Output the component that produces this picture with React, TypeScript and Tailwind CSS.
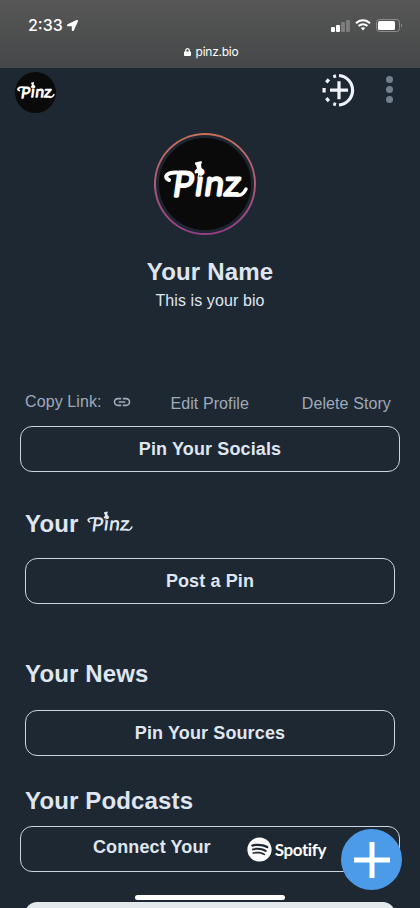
import React from "react";
import { FaSpotify, FaLock, FaLocationArrow } from "react-icons/fa";
import { MdLink } from "react-icons/md";

const PinzLogo: React.FC<{ className?: string; weight?: number }> = ({ className, weight = 3 }) => (
  <svg
    viewBox="0 0 82 40"
    className={`overflow-visible ${className}`}
    fill="currentColor"
    stroke="currentColor"
    strokeLinecap="round"
    strokeLinejoin="round"
  >
    <text
      x="7 26.5 35 52.5"
      y="31.5 30.5 30.5 30.5"
      fontSize="30"
      fontFamily="Lato, 'Open Sans', sans-serif"
      fontWeight="300"
      strokeWidth={weight}
      transform="translate(5 0) skewX(-8) scale(1.13 1.12)"
    >
      Pinz
    </text>
    {/* flourishes */}
    <path d="M5 19 C-1 16 3 11 13 11.5" fill="none" strokeWidth={weight + 1} />
    <path d="M73 34 C77 35 80 32 82 28" fill="none" strokeWidth={weight + 0.5} />
    {/* push pin */}
    <path d="M31 1.5 L37.5 0 L38 2 L37 3 L37.5 7 L40 9 L39.5 11 L31 12.5 L30.5 10 L33 7.5 L32 4 L31 3.5 Z" stroke="none" />
    <path d="M35 12 L34 17" fill="none" strokeWidth="1.2" />
  </svg>
);

const StatusBar = () => (
  <div className="h-[68px] bg-linear-to-b from-[#575757] to-[#454748] text-white">
    <div className="flex items-center justify-between h-[42px] pt-2 pl-7 pr-[17px]">
      <div className="flex items-center gap-1">
        <span className="font-['Inter'] text-[16px] font-medium leading-none">2:33</span>
        <FaLocationArrow className="w-[11px] h-[11px]" />
      </div>
      <div className="flex items-center gap-[5px]">
        <svg width="19" height="13" viewBox="0 0 19 13" fill="#fff">
          <rect x="0" y="8" width="4" height="5" rx="1" />
          <rect x="5" y="6" width="4" height="7" rx="1" />
          <rect x="10" y="3" width="4" height="10" rx="1" opacity=".25" />
          <rect x="15" y="1" width="4" height="12" rx="1" opacity=".25" />
        </svg>
        <svg width="16" height="12" viewBox="0 0 16 12" fill="none" stroke="#fff" strokeWidth="2">
          <path d="M1 4.3 C5 .1 11 .1 15 4.3" />
          <path d="M3.6 7 C6 4.5 10 4.5 12.4 7" />
          <path d="M5.8 9 C7 8 9 8 10.2 9 L8 11.4 Z" fill="#fff" stroke="none" />
        </svg>
        <svg width="27" height="13" viewBox="0 0 27 13">
          <rect x=".5" y=".5" width="23" height="12" rx="3" fill="none" stroke="#8d8d8d" />
          <rect x="2" y="2" width="17" height="9" rx="1.5" fill="#fff" />
          <path d="M25 4.5 Q27 6.5 25 8.5 Z" fill="#8d8d8d" />
        </svg>
      </div>
    </div>
    <div className="flex items-center justify-center gap-[5px] h-5 pl-[2px]">
      <FaLock className="w-[7px] h-[10px]" />
      <span className="font-['Inter'] text-[12px] leading-none tracking-[-0.25px]">pinz.bio</span>
    </div>
  </div>
);

const PinButton: React.FC<{ children: React.ReactNode; className?: string }> = ({ children, className = "" }) => (
  <button
    type="button"
    className={`flex items-center justify-center h-[46px] rounded-xl border border-[#cbd5e0] text-lg font-bold leading-none tracking-[0.12px] ${className}`}
  >
    {children}
  </button>
);

const App: React.FC = () => {
  return (
    <div className="relative w-[420px] h-[908px] overflow-hidden bg-[#1e2833] text-[#dfe6f1] font-['Liberation_Sans',sans-serif]">
      <StatusBar />

      <header className="flex items-start justify-between h-[65px] pt-[4px] pl-[15px] pr-[27px]">
        <div className="flex items-center justify-center w-[41px] h-[41px] rounded-full bg-[#0a0a0a] text-white">
          <PinzLogo className="w-[37px] h-[18px] -mt-[3px]" />
        </div>
        <div className="flex items-center gap-[31px]">
          <svg width="34" height="36" viewBox="0 0 34 36" fill="none" stroke="#f0f4fa" strokeWidth="3.2">
            <path d="M18 3.5 A14.8 14.8 0 0 1 18 33" />
            <path d="M15 3.9 L12.3 4.7 M7.9 7.4 L5.3 10.4 M3.1 16 V20.5 M5.3 26.1 L7.9 29.1 M12.3 31.8 L15 32.6" />
            <path d="M9 18.2 H27 M18 9.2 V27.2" />
          </svg>
          <div className="flex flex-col gap-[3px] -mt-px">
            <span className="w-[7px] h-[7px] rounded-full bg-[#737f8c]" />
            <span className="w-[7px] h-[7px] rounded-full bg-[#737f8c]" />
            <span className="w-[7px] h-[7px] rounded-full bg-[#737f8c]" />
          </div>
        </div>
      </header>

      <section className="flex flex-col items-center h-[258px]">
        <div className="w-[102px] h-[102px] mr-[10px] rounded-full bg-linear-to-b from-[#c9705a] to-[#963f87] p-[2px]">
          <div className="flex items-center justify-center w-full h-full rounded-full bg-[#0a0a0a] border-[3px] border-[#1e2430] text-white">
            <PinzLogo className="w-[82px] h-10 -mt-1.5 shrink-0" />
          </div>
        </div>
        <h1 className="mt-[25px] text-2xl font-bold leading-6 tracking-[0.15px]">Your Name</h1>
        <p className="mt-[7px] text-base leading-5 tracking-[0.1px]">This is your bio</p>
      </section>

      <div className="flex items-center justify-between h-[35px] pl-[25px] pr-[29px] pb-[10px] text-base leading-none tracking-[0.1px] text-[#a0aaba]">
        <div className="flex items-center gap-[10px] -mt-[3px]">
          <span>Copy Link:</span>
          <MdLink className="w-5 h-5" />
        </div>
        <span className="mr-[14px]">Edit Profile</span>
        <span>Delete Story</span>
      </div>

      <div className="flex flex-col px-5">
        <PinButton>Pin Your Socials</PinButton>
      </div>

      <section className="flex flex-col px-[25px] pt-[35px]">
        <h2 className="flex items-center gap-[8px] h-[33px] text-2xl font-bold tracking-[0.15px]">
          Your
          <PinzLogo className="w-[45px] h-[27px] -mt-[3px]" weight={2} />
        </h2>
        <PinButton className="mt-[18px]">Post a Pin</PinButton>
      </section>

      <section className="flex flex-col px-[25px] pt-[54px]">
        <h2 className="h-8 text-2xl font-bold tracking-[0.15px]">Your News</h2>
        <PinButton className="mt-5">Pin Your Sources</PinButton>
      </section>

      <section className="flex flex-col px-5 pt-[29px]">
        <h2 className="h-8 pl-[5px] text-2xl font-bold tracking-[0.15px]">Your Podcasts</h2>
        <PinButton className="mt-[9px] pr-px">
          <span className="mr-[36px] -mt-1">Connect Your</span>
          <span className="flex items-center gap-[3px] text-white">
            <FaSpotify className="w-[25px] h-[25px]" />
            <span className="font-['Lato'] text-[17px] font-bold tracking-[-0.4px]">Spotify</span>
          </span>
        </PinButton>
      </section>

      <div className="mx-[25px] mt-[30px] h-[46px] rounded-xl bg-[#e2e8ec]" />

      <button
        type="button"
        aria-label="Add"
        className="absolute left-[341px] top-[829px] flex items-center justify-center w-[61px] h-[61px] rounded-full bg-[#4b9be8]"
      >
        <svg width="36" height="36" viewBox="0 0 36 36" stroke="#fff" strokeWidth="5">
          <path d="M0 18 H36 M18 0 V36" />
        </svg>
      </button>
      <div className="absolute left-[135px] top-[895px] w-[150px] h-[5px] rounded-full bg-white" />
    </div>
  );
};

export default App;
